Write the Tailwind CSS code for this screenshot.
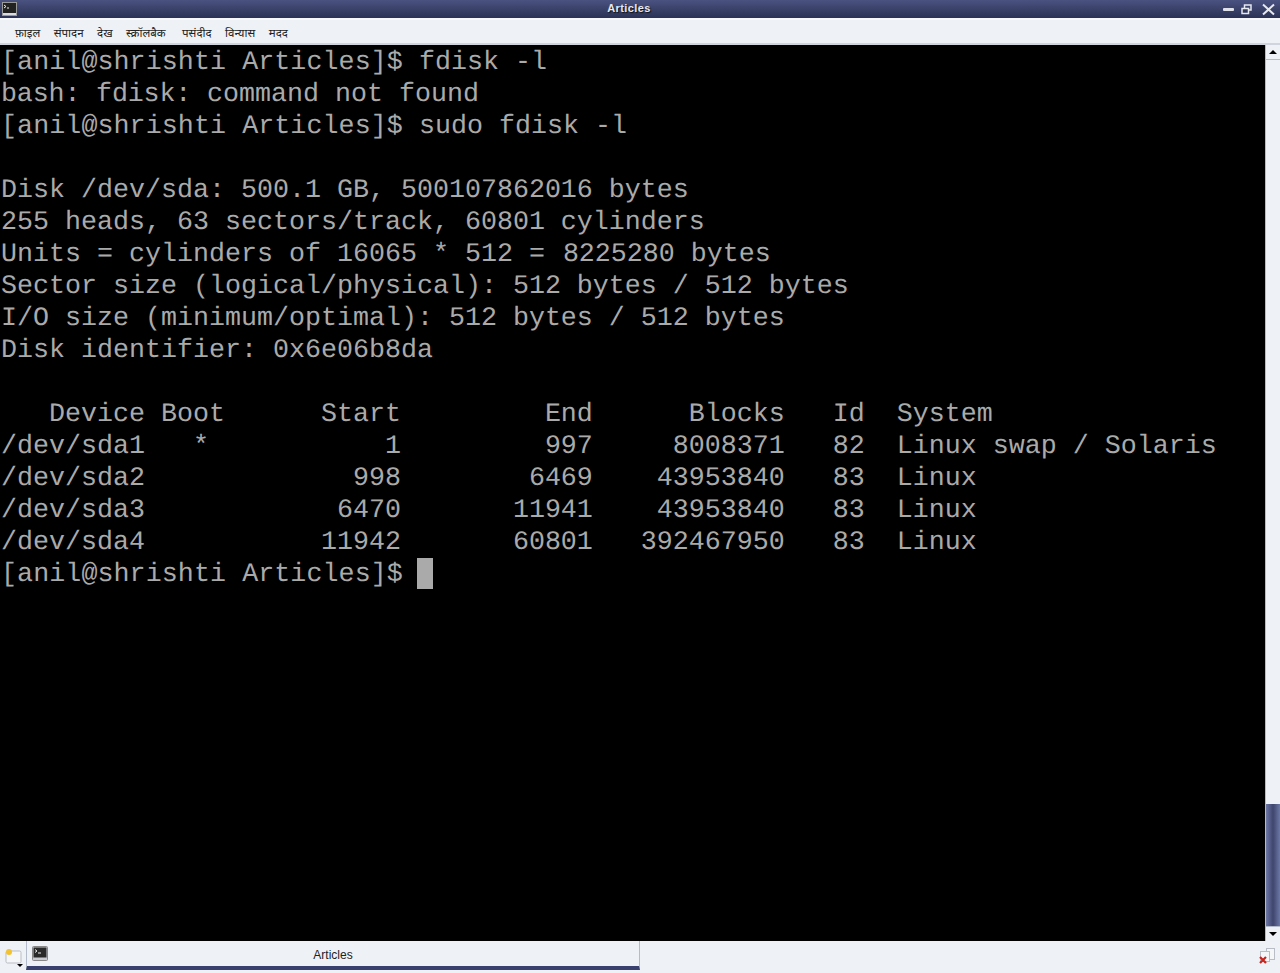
<!DOCTYPE html>
<html lang="en">
  <head>
    <meta charset="UTF-8" />
    <title>Articles</title>
    <script src="https://cdn.jsdelivr.net/npm/@tailwindcss/browser@4"></script>
  </head>
  <body class="w-[1280px] h-[973px] overflow-hidden flex flex-col bg-[#eef1f6] font-['Liberation_Sans',sans-serif]">
    <!-- title bar -->
    <header class="h-[20px] shrink-0 flex items-center bg-gradient-to-b from-[#4a5380] to-[#2b3256] border-b-2 border-[#f7f8fb] relative">
      <svg class="ml-[2px] w-[15px] h-[14px]" viewBox="0 0 15 14">
        <rect x="0.5" y="0.5" width="14" height="13" fill="#d8dbe0" stroke="#999"/>
        <rect x="1" y="1" width="13" height="10" fill="#222"/>
        <path d="M2 3l2 1.5-2 1.5M5 6h2" stroke="#eee" fill="none"/>
      </svg>
      <span class="absolute left-0 w-[1258px] top-0 text-center text-[11px] font-bold tracking-[0.4px] text-[#e6e8f0] leading-[16px] [text-shadow:1px_1px_1px_#111]">Articles</span>
      <div class="ml-auto flex items-center mr-[5px]">
        <svg class="w-[13px] h-[13px]" viewBox="0 0 13 13"><rect x="1" y="5" width="11" height="3" rx="1" fill="#dfe2ea"/></svg>
        <svg class="ml-[6px] w-[11px] h-[11px]" viewBox="0 0 11 11" fill="none" stroke="#e6e8f0"><rect x="3.5" y="1" width="6.5" height="5" stroke-width="1.5"/><rect x="1" y="4.5" width="6.5" height="5" fill="#333a5e" stroke-width="1.5"/></svg>
        <svg class="ml-[10px] w-[13px] h-[13px]" viewBox="0 0 13 13" stroke="#e6e8f0" stroke-width="2"><path d="M1 1.5l11 10M12 1.5l-11 10"/></svg>
      </div>
    </header>
    <!-- menu -->
    <nav class="h-[25px] shrink-0 flex items-center pl-[15px] pt-[3px] gap-[13.5px] bg-[#eef1f6] border-b-2 border-[#cfd4dd] text-[11.5px] text-[#222] font-['Noto_Sans',sans-serif]">
      <span>फ़ाइल</span><span>संपादन</span><span>देख</span><span>स्क्रॉलबैक</span><span class="ml-[3px]">पसंदीद</span><span>विन्यास</span><span>मदद</span>
    </nav>
    <!-- terminal + scrollbar -->
    <div class="flex-1 flex min-h-0">
      <pre class="flex-1 bg-black text-[#aaaaaa] pl-[1px] pt-[2px] font-['Liberation_Mono',monospace] text-[26.67px] leading-[32px] [text-rendering:geometricPrecision]"><span class="tracking-[0.08px]">[anil@shrishti Articles]$ </span>fdisk -l
<span class="tracking-[-0.15px]">bash: fdisk: </span>command not found
<span class="tracking-[0.08px]">[anil@shrishti Articles]$ </span>sudo fdisk -l

Disk /dev/sda: 500.1 GB, 500107862016 bytes
255 heads, 63 sectors/track, 60801 cylinders
Units = cylinders of 16065 * 512 = <span class="ml-[2px]">8225280 bytes</span>
Sector size (logical/physical): 512 bytes / 512 bytes
I/O size (minimum/optimal): 512 bytes / 512 bytes
Disk identifier: 0x6e06b8da

   Device Boot      Start         End      Blocks   Id  System
/dev/sda1   *           1         997     8008371   82  Linux swap / Solaris
/dev/sda2             998        6469    43953840   83  Linux
/dev/sda3            6470       11941    43953840   83  Linux
/dev/sda4           11942       60801   392467950   83  Linux
<span class="tracking-[0.08px]">[anil@shrishti Articles]$ </span><span class="inline-block w-[16px] h-[31px] -ml-[2px] -translate-y-px align-top bg-[#aaaaaa]"></span></pre>
      <div class="w-[15px] shrink-0 flex flex-col bg-[#eef1f6] border-l border-[#b4bccb]">
        <div class="h-[15px] flex items-center justify-center border-b border-[#b4bccb]">
          <div class="w-0 h-0 border-x-[4px] border-x-transparent border-b-[4px] border-b-black"></div>
        </div>
        <div class="flex-1"></div>
        <div class="h-[122px] bg-gradient-to-r from-[#6d78a6] via-[#3f466e] to-[#6d78a6]"></div>
        <div class="h-[15px] flex items-center justify-center border-t border-[#b4bccb]">
          <div class="w-0 h-0 border-x-[4px] border-x-transparent border-t-[4px] border-t-black"></div>
        </div>
      </div>
    </div>
    <!-- taskbar -->
    <footer class="h-[32px] shrink-0 flex bg-[#eef1f6] relative">
      <div class="w-[26px] shrink-0 relative">
        <svg class="absolute left-[5px] top-[7px] w-[18px] h-[20px]" viewBox="0 0 18 20">
          <rect x="1" y="3" width="15" height="12" rx="1.5" fill="#f5f6f8" stroke="#b9bdc5"/>
          <circle cx="4" cy="4" r="3" fill="#f2c230"/>
          <path d="M12 16h6l-3 3z" fill="#000"/>
        </svg>
      </div>
      <div class="w-[614px] h-[29px] bg-[#eef1f6] border-l border-r border-[#b4bccb] border-b-[4px] border-b-[#39406d] flex items-center relative">
        <svg class="ml-[5px] w-[16px] h-[15px]" viewBox="0 0 16 15">
          <rect x="0.5" y="0.5" width="15" height="14" rx="1" fill="#c8ccd2" stroke="#888"/>
          <rect x="1.5" y="1.5" width="13" height="10" fill="#2a2a2a"/>
          <path d="M3 3.5l2 1.5-2 1.5M6 7h3" stroke="#eee" fill="none"/>
        </svg>
        <span class="absolute left-0 right-0 top-[6px] text-center text-[12px] leading-[16px] text-[#222]">Articles</span>
      </div>
      <div class="ml-auto mr-[4px] mt-[6px]">
        <svg class="w-[18px] h-[19px]" viewBox="0 0 18 19">
          <rect x="8.5" y="1.5" width="8" height="11" fill="#f5f6f8" stroke="#b9bdc5"/>
          <rect x="2.5" y="4.5" width="9" height="10" fill="#f5f6f8" stroke="#b9bdc5"/>
          <path d="M2 10l6 6M8 10l-6 6" stroke="#c8241e" stroke-width="2.2"/>
        </svg>
      </div>
    </footer>
  </body>
</html>
